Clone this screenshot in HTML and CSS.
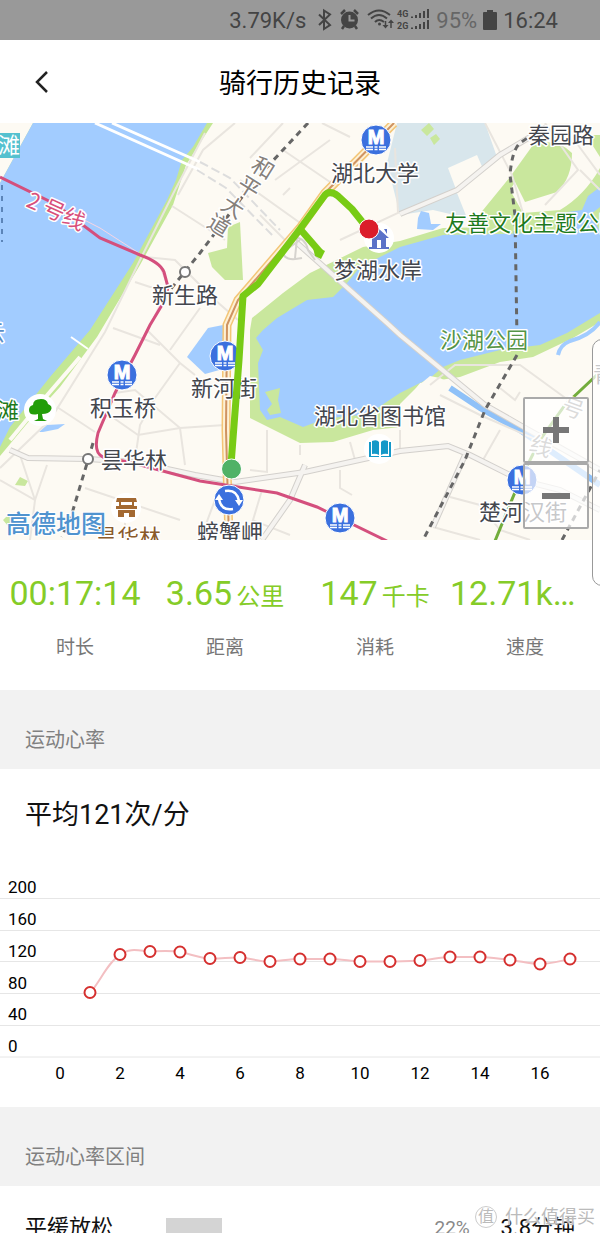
FILE: index.html
```html
<!DOCTYPE html>
<html lang="zh-CN">
<head>
  <meta charset="UTF-8" />
  <meta name="viewport" content="width=device-width, initial-scale=1.0"/>
  <title>骑行历史记录</title>
  <link rel="stylesheet" href="styles.css">
</head>
<body>
  <div class="app">
    <!-- Status bar -->
    <div class="status-bar">
      <span>3.79K/s</span>
      <svg class="status-icons" width="112" height="24" viewBox="318 8 112 24">
        <path d="M319 14.500l11 10.500-6 4V10.500l6 4-11 10.500" fill="none" stroke="#444" stroke-width="2"/>
        <circle cx="349.500" cy="20" r="8.500" fill="#444"/>
        <path d="M341 14l4-4M358 14l-4-4M344 26l-2 3M355 26l2 3" stroke="#444" stroke-width="2.500"/>
        <path d="M349.500 15v5.500h5" fill="none" stroke="#999" stroke-width="2"/>
        <path d="M368 15q11-9 22 0M371 18.500q8-7 16 0M375 22q4-4 9 0" fill="none" stroke="#444" stroke-width="2"/>
        <circle cx="379.500" cy="24" r="1.500" fill="#444"/>
        <path d="M385.500 21v6M391 28v-6" stroke="#444" stroke-width="1.500"/>
        <path d="M382.500 25h6l-3 3.500zM388 23h6l-3-3.500z" fill="#444"/>
        <g class="net-text"><text x="397" y="17">4G</text><text x="397" y="29">2G</text></g>
        <path d="M412 18v-1.500M416 18v-3M420 18v-5M424 18v-7M428 18V9M412 29v-1.500M416 29v-3M420 29v-5M424 29v-7M428 29v-9" stroke="#444" stroke-width="2"/>
      </svg>
      <span class="battery-text">95%</span>
      <svg width="14" height="20" viewBox="0 0 14 20"><path d="M1 2h3V0h6v2h3q1 0 1 1v16q0 1-1 1H1q-1 0-1-1V3q0-1 1-1z" fill="#444"/></svg>
      <span>16:24</span>
    </div>

    <!-- Header -->
    <header class="header">
      <button class="back-btn" aria-label="返回">
        <svg width="16" height="24" viewBox="0 0 16 24"><path d="M13 2L3 12l10 10" fill="none" stroke="#222" stroke-width="2.500"/></svg>
      </button>
      <h1>骑行历史记录</h1>
    </header>

    <!-- Map -->
    <div class="map-box">
      <svg class="map" viewBox="0 123 600 417" role="img" aria-label="骑行路线">
        <defs>
          <g id="metro">
            <circle r="15" fill="#3b70de" stroke="#fff" stroke-width="1"/>
            <text class="metro-m" y="4">M</text>
            <path d="M-10 7H-3M3 7H10M-10 9.500H-3M-1.500 9.500h3M3 9.500H10M-1.500 7h3" stroke="#fff" stroke-width="1.500"/>
          </g>
        </defs>
        <rect y="123" width="600" height="417" fill="#fdfaf3"/>

        <!-- river and shore -->
        <path d="M33 123H213L200 143 186 165 173 205 140 265 97 337 60 387 30 420 0 456V183z" fill="#c3e795"/>
        <path d="M33 123H207L193 147 182 160 176 180 167 200 133 263 90 330 50 377 10 427 0 447V183z" fill="#a2ccff"/>
        <path d="M80 357L43 400 10 440" fill="none" stroke="#fdfaf3" stroke-width="4"/>
        <path d="M71 337l17 12" stroke="#fff" stroke-width="2"/>
        <path d="M39 432l8-7 18-1-7 5-15 3z" fill="#a2ccff"/>

        <!-- campus and parks -->
        <path d="M397 123H485L498 160 483 170 457 193 467 218 433 210 400 215 387 163z" fill="#d8e6ec"/>
        <path d="M448 168L477 155 484 171 457 192z" fill="#fdfaf3"/>
        <path d="M421 130l8-7 5 6-7 7zM430 138l6-4 4 5-6 6z" fill="#c9e79d"/>
        <path d="M470 226L510 177 533 145Q556 137 572 153 572 178 557 192L525 202 515 182 510 190 523 213 560 210Q585 195 600 168V232H470z" fill="#c9e79d"/>
        <path d="M586 135l14 22v-22z" fill="#c9e79d"/>
        <path d="M240 222L243 280H225L212 267 208 253 227 248 228 227z" fill="#c9e79d"/>
        <path d="M15 485l5-8 8 4-3 5zM3 520l6-6 4 6-5 6z" fill="#c9e79d"/>
        <path d="M250 330L252 318 283 293 310 273 363 247 400 241 443 228 600 225V322L573 338 533 357 500 362 460 377 420 383 400 410 400 427 373 430 333 442 300 443 250 418z" fill="#c9e79d"/>
        <path d="M263 330L277 318 307 300 333 297 347 283 360 267 400 247 443 235 600 232V313L567 333 540 345 500 350 460 360 443 367 430 378 400 393 367 415 345 416 322 420 303 427 280 417 267 420 260 410 258 363 263 350 256 338z" fill="#a2ccff"/>
        <path d="M265 392l15-4-2 12 3 13-11 2-3-5 5-6z" fill="#c9e79d"/>
        <path d="M418 218l3-7 8 2 2 11h10l-8 6-16-1z" fill="#a2ccff"/>
        <path d="M560 213l22-3 6-14 12-9v20l-9 7 9 18h-30z" fill="#a2ccff"/>
        <path d="M187 357L208 328 223 325V369L205 374z" fill="#a2ccff"/>
        <path d="M430 376L440 378 480 398 475 410 430 445 400 452V404L418 386z" fill="#fdfaf3"/>
        <path d="M450 388L480 408 520 430 600 485" fill="none" stroke="#8fc1f8" stroke-width="6"/>
        <path d="M600 322q-10 14-30 19-10 4-12 14" fill="none" stroke="#a2ccff" stroke-width="4"/>

        <!-- streets -->
        <g class="street">
          <path d="M205 133L175 190 140 260 105 332 50 420 0 468"/>
          <path d="M235 123L203 150 178 195M172 206L225 240M145 257L175 260 215 300 238 320M135 282L150 287H170M113 328L160 345"/>
          <path d="M147 330L180 363 195 375M170 350L200 308M180 363L155 398 140 425 135 460M57 407L95 432M115 393L135 390 180 428 185 465M95 405L138 435 180 428 225 425M0 480L35 500 47 465M20 455L35 500 30 540M85 488L180 520M125 500V540"/>
          <path d="M250 470L267 472V430M300 445V455M350 442L355 460M252 520L290 535M262 490L247 540M200 540L215 500M340 470V488L352 495"/>
          <path d="M283 123L250 158M283 150L330 182M240 180L303 225M275 180L330 140M322 123L350 137M283 195L290 188M260 215L290 245"/>
          <path d="M395 148L398 213 340 240M485 123L512 175 523 213M580 170L600 190M578 145L600 175M545 123L578 170 545 205"/>
          <path d="M440 395L480 415 560 450M430 385L455 365 520 365 575 405M500 388L515 400 520 392M500 430L483 460M450 497L480 505 500 530 530 540M433 527L480 540M400 430V454"/>
        </g>
        <g class="road">
          <path d="M10 450L28 458 88 459 135 462 195 475 235 482 305 472 400 451 448 446 470 455 520 480 560 490 600 510"/>
          <path d="M305 465L290 500 262 540M400 214L457 190 500 155 545 128M465 455L433 527M297 243L387 323 400 335 485 405 520 425 600 470"/>
        </g>
        <g class="road-fill">
          <path d="M10 450L28 458 88 459 135 462 195 475 235 482 305 472 400 451 448 446 470 455 520 480 560 490 600 510"/>
          <path d="M305 465L290 500 262 540M400 214L457 190 500 155 545 128M465 455L433 527M297 243L387 323 400 335 485 405 520 425 600 470"/>
        </g>
        <g class="ramp">
          <path d="M300 240L283 252Q284 262 302 258M290 238Q305 235 308 250L315 260M298 228L295 258"/>
        </g>
        <path d="M95 123L200 170M112 123L200 162" stroke="#fff" stroke-width="3"/>
        <path d="M200 162L230 178 280 230M197 170L226 188 274 237" fill="none" stroke="#ddd" stroke-width="2" stroke-dasharray="9 4"/>

        <!-- main avenue -->
        <path d="M394 123L325 193 300 228 238 300 227 325 226 430 229 540" fill="none" stroke="#f3c576" stroke-width="9"/>
        <path d="M394 123L325 193 300 228 238 300 227 325 226 430 229 540" fill="none" stroke="#fdf1d5" stroke-width="6"/>
        <path d="M394 123L325 193 300 228 238 300 227 325 226 430 229 540" fill="none" stroke="#cf9361" stroke-width="2"/>

        <!-- railways -->
        <g class="rail">
          <path d="M308 123L255 180 200 253 170 290"/>
          <path d="M93 443L88 460 73 510 62 537"/>
          <path d="M545 126L520 143Q512 150 510 175L515 215 517 340"/>
          <path d="M517 355L485 410 465 460 423 540M562 540L600 470"/>
        </g>
        <path d="M2 185V242" stroke="#5b84b8" stroke-width="2" stroke-dasharray="5 6"/>

        <!-- metro lines -->
        <path class="line-halo" d="M0 177L100 228 145 257 160 267 168 287 150 325"/>
        <path class="line2" d="M0 177L55 204 100 238 140 255Q160 262 164 272L168 287 165 300 150 325 135 355 115 393 98 433Q93 453 103 457L133 463 200 481 277 493 317 507 387 541"/>
        <path d="M600 372L565 405 540 440 520 480 495 541" fill="none" stroke="#73ad3c" stroke-width="3"/>
        <circle class="stop" cx="185" cy="272" r="5"/>
        <circle class="stop" cx="88" cy="459" r="5"/>

        <use href="#metro" x="376" y="140"/>
        <use href="#metro" x="225" y="356"/>
        <use href="#metro" x="122" y="375"/>
        <use href="#metro" x="340" y="518"/>
        <use href="#metro" x="522" y="480"/>
        <g transform="translate(229 500)">
          <circle r="15" fill="#3b70de" stroke="#fff"/>
          <path d="M-4-9Q8-11 10 1M4 9Q-8 11-10-1" fill="none" stroke="#fff" stroke-width="2.500"/>
          <path d="M6 0h8l-4 6zM-6 0h-8l4-6z" fill="#fff"/>
        </g>

        <!-- places -->
        <circle cx="379" cy="238" r="15" fill="#fff"/>
        <path d="M369 238l10-9 10 9h-3v9h3v2h-20v-2h3v-9zM384 229h3v5zM377 240v8h4v-8z" fill="#5b72c8" fill-rule="evenodd"/>
        <circle cx="40" cy="410" r="16" fill="#fff"/>
        <path d="M38 414q-9 2-9-4 0-4 4-5 0-6 8-6 6 0 7 5 5 2 3 6-2 4-9 4l1 5 4 2H34l4-2z" fill="#239d09"/>
        <circle cx="126" cy="508" r="15" fill="#fff"/>
        <path d="M117 498h19l1 4h-3v4h3v3h-21v-3h3v-4h-3zM118 510h17v7h-6v-4h-5v4h-6zM121 502v3h11v-3z" fill="#a36932" fill-rule="evenodd"/>
        <circle cx="379" cy="449" r="15" fill="#fff"/>
        <path d="M372 441q5-2 7 1v13q-3-2-7-1zM381 442q2-3 7-1v13q-4-1-7 1zM369 442h2v14h8v1h-10zM391 442h-2v14h-8v1h10z" fill="#1599c8"/>

        <!-- labels -->
        <rect y="133" width="20" height="25" fill="#55c1cf"/>
        <g class="label">
          <text x="331" y="181">湖北大学</text>
          <text x="334" y="278">梦湖水岸</text>
          <text x="528" y="143">秦园路</text>
          <text x="152" y="303">新生路</text>
          <text x="191" y="396">新河街</text>
          <text x="90" y="416">积玉桥</text>
          <text x="101" y="468">昙华林</text>
          <text x="314" y="424">湖北省图书馆</text>
          <text x="197" y="540">螃蟹岬</text>
          <text x="479" y="520">楚河汉街</text>
          <text x="593" y="382">青</text>
          <text class="brown" x="95" y="545">昙华林</text>
          <text class="green" x="445" y="231">友善文化主题公园</text>
          <text class="park" x="440" y="348">沙湖公园</text>
          <text class="green" x="-3" y="418">滩</text>
          <text class="blue" x="-17" y="340">云</text>
          <text class="pink" transform="translate(25 206) rotate(24)">2 号线</text>
          <text class="metro9" transform="translate(560 412) rotate(20)">号</text>
          <text class="metro9" transform="translate(528 450) rotate(20)">线</text>
          <g class="avenue">
            <text transform="translate(263 168) rotate(32)" y="8">和</text>
            <text transform="translate(249 187) rotate(32)" y="8">平</text>
            <text transform="translate(233 207) rotate(32)" y="8">大</text>
            <text transform="translate(219 225) rotate(32)" y="8">道</text>
          </g>
        </g>
        <text class="tan-tag" x="-2" y="153">滩</text>

        <!-- ride track -->
        <path class="track" d="M368 229L352 209 338 196Q330 190 325 195L300 229 258 284 243 296 239 360 231 465"/>
        <path class="track" d="M300 229L320 252"/>
        <path d="M312 244l13 7-4 8-6-3z" fill="#78cb15"/>
        <circle cx="369" cy="229" r="10" fill="#db1c2a" stroke="#fff"/>
        <circle cx="231.500" cy="469" r="10" fill="#50b267" stroke="#fff"/>
        <text class="map-logo" x="6" y="533">高德地图</text>
      </svg>
      <div class="zoom-box">
        <button aria-label="放大"><svg width="28" height="28" viewBox="0 0 28 28"><path d="M14 1v26M1 14h26" stroke="#777" stroke-width="6"/></svg></button>
        <button aria-label="缩小"><svg width="28" height="28" viewBox="0 0 28 28"><path d="M0 14h28" stroke="#777" stroke-width="6"/></svg></button>
      </div>
      <div class="side-handle"></div>
    </div>

    <!-- Stats -->
    <div class="stats">
      <div class="stat"><p class="value">00:17:14</p><p class="name">时长</p></div>
      <div class="stat"><p class="value">3.65<small>公里</small></p><p class="name">距离</p></div>
      <div class="stat"><p class="value">147<small>千卡</small></p><p class="name">消耗</p></div>
      <div class="stat"><p class="value value-long">12.71k…</p><p class="name">速度</p></div>
    </div>

    <!-- Heart rate -->
    <h2 class="section-title">运动心率</h2>
    <div class="heart">
      <p class="average">平均121次/分</p>
      <svg class="chart" viewBox="0 860 600 247" role="img" aria-label="运动心率">
        <path d="M0 898.500H600M0 930.500H600M0 961.500H600M0 993.500H600M0 1025.500H600M0 1057H600" stroke="#e6e6e6"/>
        <g>
          <text x="8" y="893">200</text>
          <text x="8" y="925">160</text>
          <text x="8" y="957">120</text>
          <text x="8" y="989">80</text>
          <text x="8" y="1020">40</text>
          <text x="8" y="1052">0</text>
        </g>
        <g class="x-axis">
          <text x="60" y="1079">0</text>
          <text x="120" y="1079">2</text>
          <text x="180" y="1079">4</text>
          <text x="240" y="1079">6</text>
          <text x="300" y="1079">8</text>
          <text x="360" y="1079">10</text>
          <text x="420" y="1079">12</text>
          <text x="480" y="1079">14</text>
          <text x="540" y="1079">16</text>
        </g>
        <path d="M90 993C100 982 108 962 120 955 130 947 140 951 150 951.500 160 951 170 950 180 952 190 954 200 958 210 958.500 220 959 230 957 240 957.500 250 958 260 962 270 961.500 280 961 290 959 300 959H330C340 959 350 961 360 961.500H390C400 961.500 410 961 420 960.500 430 960 440 957 450 957H480C490 957 500 959 510 960 520 961 530 964 540 964 550 964 560 961 570 959" fill="none" stroke="#f3bfc2" stroke-width="2"/>
        <g class="dots">
          <circle cx="90" cy="992.500" r="5.500"/>
          <circle cx="120" cy="954.500" r="5.500"/>
          <circle cx="150" cy="951.500" r="5.500"/>
          <circle cx="180" cy="952" r="5.500"/>
          <circle cx="210" cy="958.500" r="5.500"/>
          <circle cx="240" cy="957.500" r="5.500"/>
          <circle cx="270" cy="961.500" r="5.500"/>
          <circle cx="300" cy="959" r="5.500"/>
          <circle cx="330" cy="959" r="5.500"/>
          <circle cx="360" cy="961.500" r="5.500"/>
          <circle cx="390" cy="961.500" r="5.500"/>
          <circle cx="420" cy="960.500" r="5.500"/>
          <circle cx="450" cy="957" r="5.500"/>
          <circle cx="480" cy="957" r="5.500"/>
          <circle cx="510" cy="960" r="5.500"/>
          <circle cx="540" cy="964" r="5.500"/>
          <circle cx="570" cy="959" r="5.500"/>
        </g>
      </svg>
    </div>

    <!-- Heart rate zones -->
    <h2 class="section-title">运动心率区间</h2>
    <div class="zone">
      <span class="zone-name">平缓放松</span>
      <div class="zone-track"><div class="zone-bar" style="width: 22%;"></div></div>
      <span class="zone-percent">22%</span>
      <span class="zone-time">3.8分钟</span>
    </div>

    <div class="watermark"><span class="seal">值</span>什么值得买</div>
  </div>
</body>
</html>
```
FILE: styles.css
```css
body {
  margin: 0;
  font-family: Roboto, 'Noto Sans CJK SC', sans-serif;
  background: #fff;
  color: #111;
}

h1, h2, p {
  margin: 0;
  font-weight: 400;
}

button {
  padding: 0;
  border: none;
  background: none;
  cursor: pointer;
}

svg {
  display: block;
}

.app {
  position: relative;
  height: 100vh;
  overflow: hidden;
}

.status-bar {
  display: flex;
  align-items: center;
  justify-content: flex-end;
  gap: 6px;
  height: 40px;
  padding-right: 42px;
  background: #999;
  color: #444;
  font-size: 22px;
}

.status-icons {
  margin-left: 6px;
}

.net-text {
  font-size: 9px;
  font-weight: bold;
  fill: #444;
}

.battery-text {
  color: #666;
}

.header {
  display: grid;
  grid-template-columns: 84px 1fr 84px;
  align-items: center;
  height: 83px;
  text-align: center;
}

.header h1 {
  padding-top: 4px;
  font-size: 27px;
  line-height: 40px;
  color: #000;
}

.back-btn {
  display: flex;
  justify-content: center;
}

/* map */
.map-box {
  position: relative;
}

.map {
  width: 100%;
  height: auto;
}

.street path {
  fill: none;
  stroke: #e9e5df;
  stroke-width: 2;
}

.road path {
  fill: none;
  stroke: #d3d0cc;
  stroke-width: 6;
}

.road-fill path {
  fill: none;
  stroke: #f5f3f0;
  stroke-width: 4;
}

.ramp path {
  fill: none;
  stroke: #d6d3ce;
  stroke-width: 2;
}

.rail path {
  fill: none;
  stroke: #666;
  stroke-width: 3;
  stroke-dasharray: 6 5;
}

.line-halo {
  fill: none;
  stroke: #f7d5e3;
  stroke-width: 1;
}

.line2 {
  fill: none;
  stroke: #d44f7d;
  stroke-width: 3;
}

.stop {
  fill: #fff;
  stroke: #777;
  stroke-width: 2;
}

.metro-m {
  font-family: 'Liberation Sans', sans-serif;
  font-size: 20px;
  font-weight: bold;
  fill: #fff;
  stroke: #fff;
  stroke-width: 1px;
  text-anchor: middle;
}

.label text {
  font-family: 'Noto Sans CJK SC', sans-serif;
  font-size: 22px;
  fill: #43464d;
  stroke: #fff;
  stroke-width: 3px;
  stroke-linejoin: round;
  paint-order: stroke;
}

.label .brown { fill: #8a5a2b; }
.label .green { fill: #1d7a1d; }
.label .park { fill: #559447; }
.label .blue { fill: #5b8ec8; }
.label .pink { fill: #d8507c; }
.label .metro9 { fill: #888; }

.label .avenue text {
  fill: #85807b;
  text-anchor: middle;
}

.tan-tag {
  font-size: 22px;
  fill: #fff;
}

.track {
  fill: none;
  stroke: #78cb15;
  stroke-width: 7;
  stroke-linejoin: round;
}

.map-logo {
  font-size: 25px;
  font-weight: 500;
  fill: #4f93cf;
  stroke: #fff;
  stroke-width: 2px;
  paint-order: stroke;
}

.zoom-box {
  position: absolute;
  right: 11px;
  bottom: 11px;
  display: flex;
  flex-direction: column;
}

.zoom-box button {
  display: flex;
  align-items: center;
  justify-content: center;
  width: 66px;
  height: 66px;
  border: 2px solid #aaa;
  border-radius: 2px;
  background: rgba(255, 255, 255, 0.7);
}

.side-handle {
  position: absolute;
  right: -12px;
  bottom: -46px;
  width: 18px;
  height: 245px;
  border: 1px solid #999;
  border-radius: 10px;
  background: rgba(255, 255, 255, 0.7);
}

/* stats */
.stats {
  display: grid;
  grid-template-columns: repeat(4, 1fr);
  height: 150px;
  text-align: center;
}

.stat {
  padding-top: 31px;
}

.value {
  height: 44px;
  font-size: 34px;
  line-height: 44px;
  color: #85cc28;
  white-space: nowrap;
}

.value small {
  margin-left: 4px;
  font-size: 24px;
  line-height: 24px;
}

.value-long {
  text-align: left;
}

.name {
  margin-top: 18px;
  font-size: 19px;
  line-height: 30px;
  color: #777;
}

.section-title {
  padding: 35px 25px 14px;
  background: #f2f2f2;
  color: #808080;
  font-size: 20px;
  line-height: 30px;
}

/* heart rate chart */
.average {
  padding: 26px 25px 25px;
  font-size: 27px;
  line-height: 40px;
}

.chart {
  width: 100%;
  height: auto;
  font-size: 17px;
}

.x-axis {
  text-anchor: middle;
}

.dots {
  fill: #fff;
  stroke: #d5302f;
  stroke-width: 2;
}

/* zones */
.zone {
  display: flex;
  align-items: center;
  padding: 22px 25px;
  font-size: 22px;
  line-height: 40px;
}

.zone-name {
  width: 141px;
}

.zone-track {
  flex: 1;
  margin-right: 14px;
}

.zone-bar {
  height: 20px;
  background: #d4d4d4;
}

.zone-percent {
  width: 66px;
  color: #888;
  font-size: 19px;
}

.zone-time {
  color: #111;
}

.watermark {
  position: absolute;
  right: 5px;
  bottom: 4px;
  display: flex;
  align-items: center;
  gap: 8px;
  color: #bbb;
  font-size: 18px;
  line-height: 24px;
  text-shadow: 0 0 1px #fff, 0 0 2px #fff;
}

.seal {
  width: 20px;
  height: 20px;
  border: 1px solid #ccc;
  border-radius: 50%;
  font-size: 16px;
  line-height: 20px;
  text-align: center;
}
```
